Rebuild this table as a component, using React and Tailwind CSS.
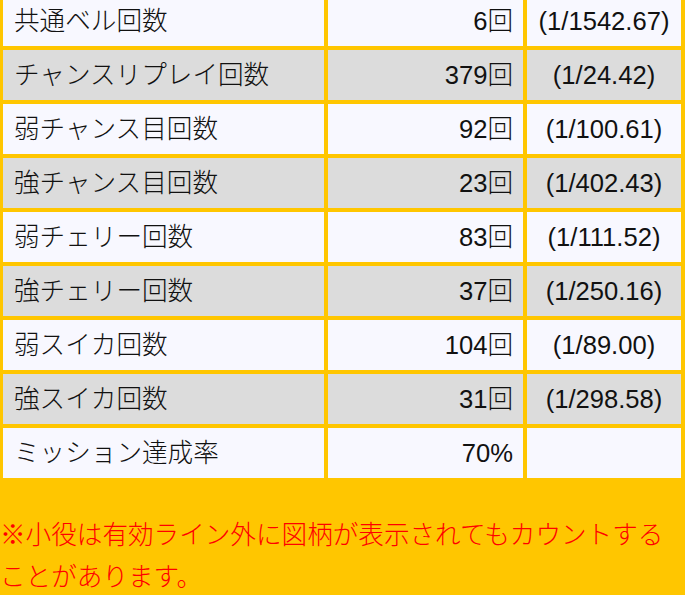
import React from 'react';

const ROWS = [
  { name: '共通ベル回数', count: '6回', rate: '(1/1542.67)' },
  { name: 'チャンスリプレイ回数', count: '379回', rate: '(1/24.42)' },
  { name: '弱チャンス目回数', count: '92回', rate: '(1/100.61)' },
  { name: '強チャンス目回数', count: '23回', rate: '(1/402.43)' },
  { name: '弱チェリー回数', count: '83回', rate: '(1/111.52)' },
  { name: '強チェリー回数', count: '37回', rate: '(1/250.16)' },
  { name: '弱スイカ回数', count: '104回', rate: '(1/89.00)' },
  { name: '強スイカ回数', count: '31回', rate: '(1/298.58)' },
  { name: 'ミッション達成率', count: '70%', rate: '' },
];

const FONT = "font-['Liberation_Sans','Noto_Sans_CJK_JP',sans-serif]";

export default function App() {
  return (
    <div className={`w-[685px] h-[595px] overflow-hidden bg-[#ffc600] text-[25.6px] text-[#111] font-light ${FONT}`}>
      {/* 小役カウント表 */}
      <div className="-mt-1 flex flex-col gap-1 pl-[3px] pr-1">
        {ROWS.map((r, i) => {
          const bg = i % 2 === 0 ? 'bg-[#f8f8ff]' : 'bg-[#dcdcdc]';
          return (
            <div key={r.name} className="flex gap-1 h-[50px]">
              <div className={`${bg} w-[321px] flex items-center pl-[11px] whitespace-nowrap`}>{r.name}</div>
              <div className={`${bg} w-[195px] flex items-center justify-end pr-[10px]`}>{r.count}</div>
              <div className={`${bg} flex-1 flex items-center justify-center`}>{r.rate}</div>
            </div>
          );
        })}
      </div>

      {/* 注意書き */}
      <p className="mt-[36px] text-[#ff0000] leading-[42px]">
        ※小役は有効ライン外に図柄が表示されてもカウントすることがあります。
      </p>
    </div>
  );
}
